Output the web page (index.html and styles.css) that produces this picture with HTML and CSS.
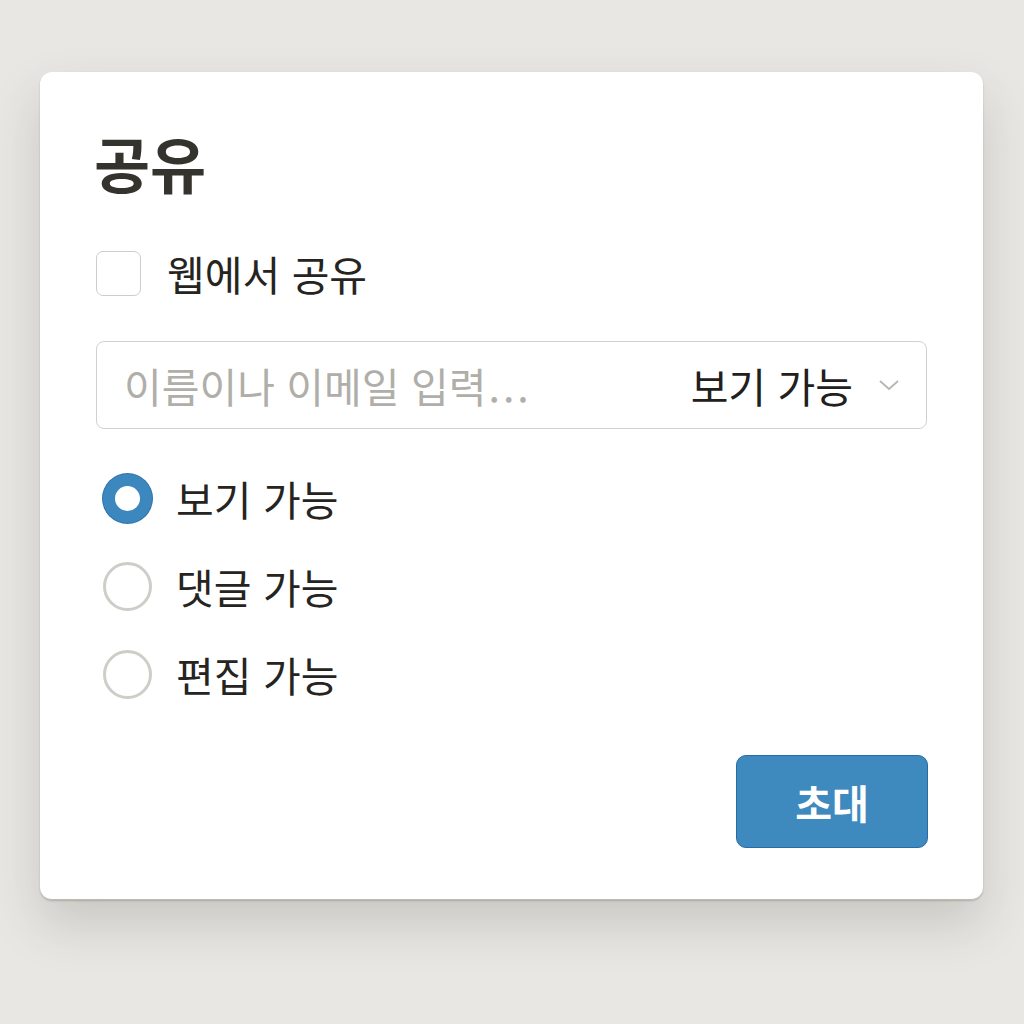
FILE: index.html
```html
<!DOCTYPE html>
<html lang="ko">
<head>
<meta charset="utf-8">
<link rel="stylesheet" href="styles.css">
</head>
<body>
<div class="card">
  <h1 class="title">공유</h1>
  <label class="check-row">
    <span class="checkbox"></span>
    <span class="check-label">웹에서 공유</span>
  </label>
  <div class="input">
    <span class="placeholder">이름이나 이메일 입력<span class="dots">...</span></span>
    <span class="perm">보기 가능</span>
    <svg class="chev" width="22" height="14" viewBox="0 0 22 14"><path d="M2 3 L11 11 L20 3" fill="none" stroke="#b8b6b0" stroke-width="1.8"/></svg>
  </div>
  <div class="radios">
    <div class="radio-row"><span class="radio selected"></span><span class="radio-label">보기 가능</span></div>
    <div class="radio-row"><span class="radio"></span><span class="radio-label">댓글 가능</span></div>
    <div class="radio-row"><span class="radio"></span><span class="radio-label">편집 가능</span></div>
  </div>
  <div class="actions">
    <button class="invite">초대</button>
  </div>
</div>
</body>
</html>
```
FILE: styles.css
```css
html, body {
  margin: 0;
  padding: 0;
}
body {
  width: 1024px;
  height: 1024px;
  background: #e8e7e4;
  font-family: "Noto Sans CJK KR", "Noto Sans", sans-serif;
  color: #2a2824;
  overflow: hidden;
}
.card {
  margin: 72px 0 0 40px;
  width: 943px;
  height: 828px;
  box-sizing: border-box;
  background: #ffffff;
  border-radius: 12px;
  border-bottom: 1px solid #bdbab4;
  box-shadow: 0 1px 2px rgba(0,0,0,0.18), 0 24px 50px rgba(60,55,45,0.18);
  padding: 126px 56px 0 56px;
  position: relative;
}
.title {
  margin: 0;
  position: absolute;
  top: 54px;
  left: 54px;
  font-size: 61px;
  font-weight: 700;
  line-height: 1.2;
  color: #35332e;
}
.check-row {
  display: flex;
  align-items: center;
  gap: 26px;
  height: 46px;
  margin-top: 52px;
}
.checkbox {
  width: 45px;
  height: 45px;
  box-sizing: border-box;
  border: 1.5px solid #cfcdc8;
  border-radius: 7px;
}
.check-label {
  font-size: 41px;
  line-height: 1;
  color: #26241f;
}
.input {
  margin-top: 45px;
  height: 88px;
  box-sizing: border-box;
  border: 1.5px solid #d3d1cc;
  border-radius: 8px;
  display: flex;
  align-items: center;
  padding: 0 26px 0 27px;
}
.placeholder {
  flex: 1;
  font-size: 41px;
  color: #b0aea9;
  white-space: nowrap;
}
.dots {
  letter-spacing: 3px;
  margin-left: 2px;
}
.perm {
  font-size: 41px;
  color: #22201c;
  margin-right: 25px;
}
.chev {
  display: block;
}
.radios {
  margin-top: 45px;
  display: flex;
  flex-direction: column;
  gap: 40px;
}
.radio-row {
  display: flex;
  align-items: center;
  gap: 24px;
  height: 48px;
  padding-left: 7px;
}
.radio {
  width: 49px;
  height: 49px;
  flex: none;
  box-sizing: border-box;
  border-radius: 50%;
  border: 3px solid #cfcdc8;
  background: #fff;
}
.radio.selected {
  border: 12px solid #3d87bf;
  box-shadow: 0 0 0 1px #2f74ad;
}
.radio-label {
  font-size: 41px;
  color: #26241f;
}
.actions {
  display: flex;
  justify-content: flex-end;
  margin-top: 57px;
  margin-right: -1px;
}
.invite {
  width: 192px;
  height: 93px;
  background: #3e89be;
  border: 1px solid #2a6aa8;
  border-radius: 10px;
  color: #ffffff;
  font-family: "Noto Sans CJK KR", sans-serif;
  font-size: 40px;
  font-weight: 700;
  cursor: pointer;
}
```
